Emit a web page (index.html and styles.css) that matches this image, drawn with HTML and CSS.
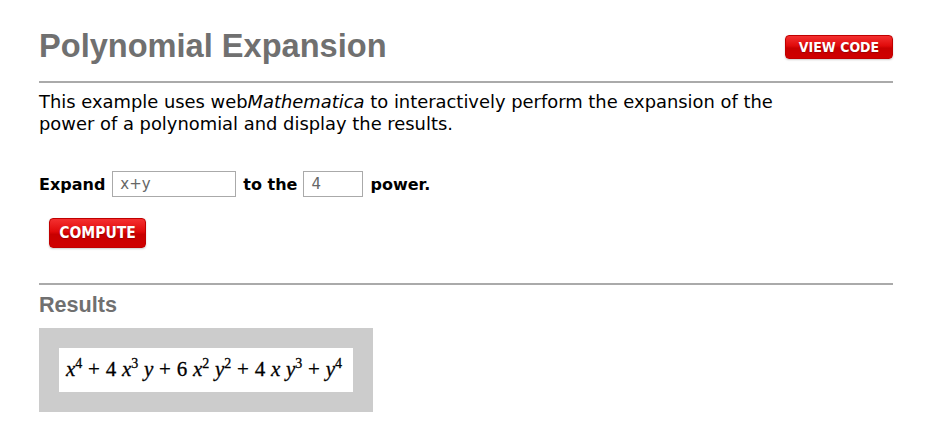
FILE: index.html
```html
<!DOCTYPE html>
<html lang="en">
<head>
    <meta charset="UTF-8">
    <title>Polynomial Expansion</title>
    <link rel="stylesheet" href="styles.css">
</head>
<body>
    <div class="page">
        <div class="title-bar">
            <h1>Polynomial Expansion</h1>
            <a href="#" class="red-button view-code">VIEW CODE</a>
        </div>

        <p class="intro">This example uses web<i>Mathematica</i> to interactively perform the expansion of the<br>
        power of a polynomial and display the results.</p>

        <form class="expand-form">
            <div class="form-row">
                <label for="expr">Expand</label>
                <input type="text" id="expr" class="expr-input" value="x+y">
                <label for="power">to the</label>
                <input type="text" id="power" class="power-input" value="4">
                <span class="label">power.</span>
            </div>
            <button type="button" class="red-button compute">COMPUTE</button>
        </form>

        <h2 class="results-title">Results</h2>
        <div class="results-box">
            <div class="result">
                <i>x</i><sup>4</sup> + 4 <i>x</i><sup>3</sup> <i>y</i> + 6 <i>x</i><sup>2</sup> <i>y</i><sup>2</sup> + 4 <i>x</i> <i>y</i><sup>3</sup> + <i>y</i><sup>4</sup>
            </div>
        </div>
    </div>
</body>
</html>
```

FILE: styles.css
```css
body {
    margin: 0;
    padding: 0;
    background-color: #fff;
    font-family: "DejaVu Sans", Verdana, sans-serif;
    color: #000;
}
.page {
    width: 854px;
    margin-left: 39px;
}
.title-bar {
    display: flex;
    justify-content: space-between;
    align-items: center;
    padding-top: 26px;
    padding-bottom: 15px;
    border-bottom: 2px solid #aaa;
}
.title-bar h1 {
    margin: 0;
    font-family: "Liberation Sans", Arial, sans-serif;
    font-size: 32.6px;
    line-height: 40px;
    color: #707070;
}
.red-button {
    display: inline-flex;
    align-items: center;
    justify-content: center;
    background: linear-gradient(#f43030, #e00a0a 45%, #c80000 55%, #d00000);
    border: 1px solid #c00000;
    border-radius: 4px;
    color: #fff;
    font-family: "DejaVu Sans", sans-serif;
    font-stretch: condensed;
    font-weight: bold;
    text-decoration: none;
    text-shadow: 0 1px 1px rgba(110, 0, 0, 0.5);
    box-shadow: 0 1px 2px rgba(0,0,0,0.2);
    cursor: pointer;
}
.view-code {
    width: 108px;
    height: 24px;
    box-sizing: border-box;
    font-size: 14px;
    margin-top: 2px;
}
.intro {
    margin: 8px 0 0;
    font-size: 17.9px;
    line-height: 22px;
}
.expand-form {
    margin-top: 36px;
}
.form-row {
    display: flex;
    align-items: center;
    font-weight: bold;
    font-size: 16px;
}
.form-row label,
.form-row .label {
    margin-right: 6px;
}
.form-row input {
    box-sizing: border-box;
    height: 26px;
    border: 1px solid #aaa;
    padding: 0 7px;
    font-family: "DejaVu Sans", sans-serif;
    font-size: 15px;
    color: #666;
    margin-right: 7px;
}
.form-row label:first-child {
    margin-right: 7px;
}
.expr-input {
    width: 124px;
}
.power-input {
    width: 60px;
}
.compute {
    width: 97px;
    height: 30px;
    box-sizing: border-box;
    margin: 21px 0 0 10px;
    padding: 0;
    font-size: 15.5px;
}
.results-title {
    margin: 35px 0 0;
    padding-top: 7px;
    border-top: 2px solid #aaa;
    font-family: "Liberation Sans", Arial, sans-serif;
    font-size: 21.6px;
    line-height: 26px;
    color: #707070;
}
.results-box {
    display: inline-block;
    margin-top: 10px;
    padding: 20px 20px 20px;
    background-color: #ccc;
}
.result {
    width: 294px;
    height: 44px;
    box-sizing: border-box;
    background-color: #fff;
    padding: 9px 0 0 7px;
    font-family: "Liberation Serif", "Times New Roman", serif;
    font-size: 21px;
    word-spacing: 0.5px;
    white-space: nowrap;
    -webkit-text-stroke: 0.3px #000;
}
.result sup {
    font-size: 14px;
    vertical-align: 8px;
    line-height: 0;
}
```
